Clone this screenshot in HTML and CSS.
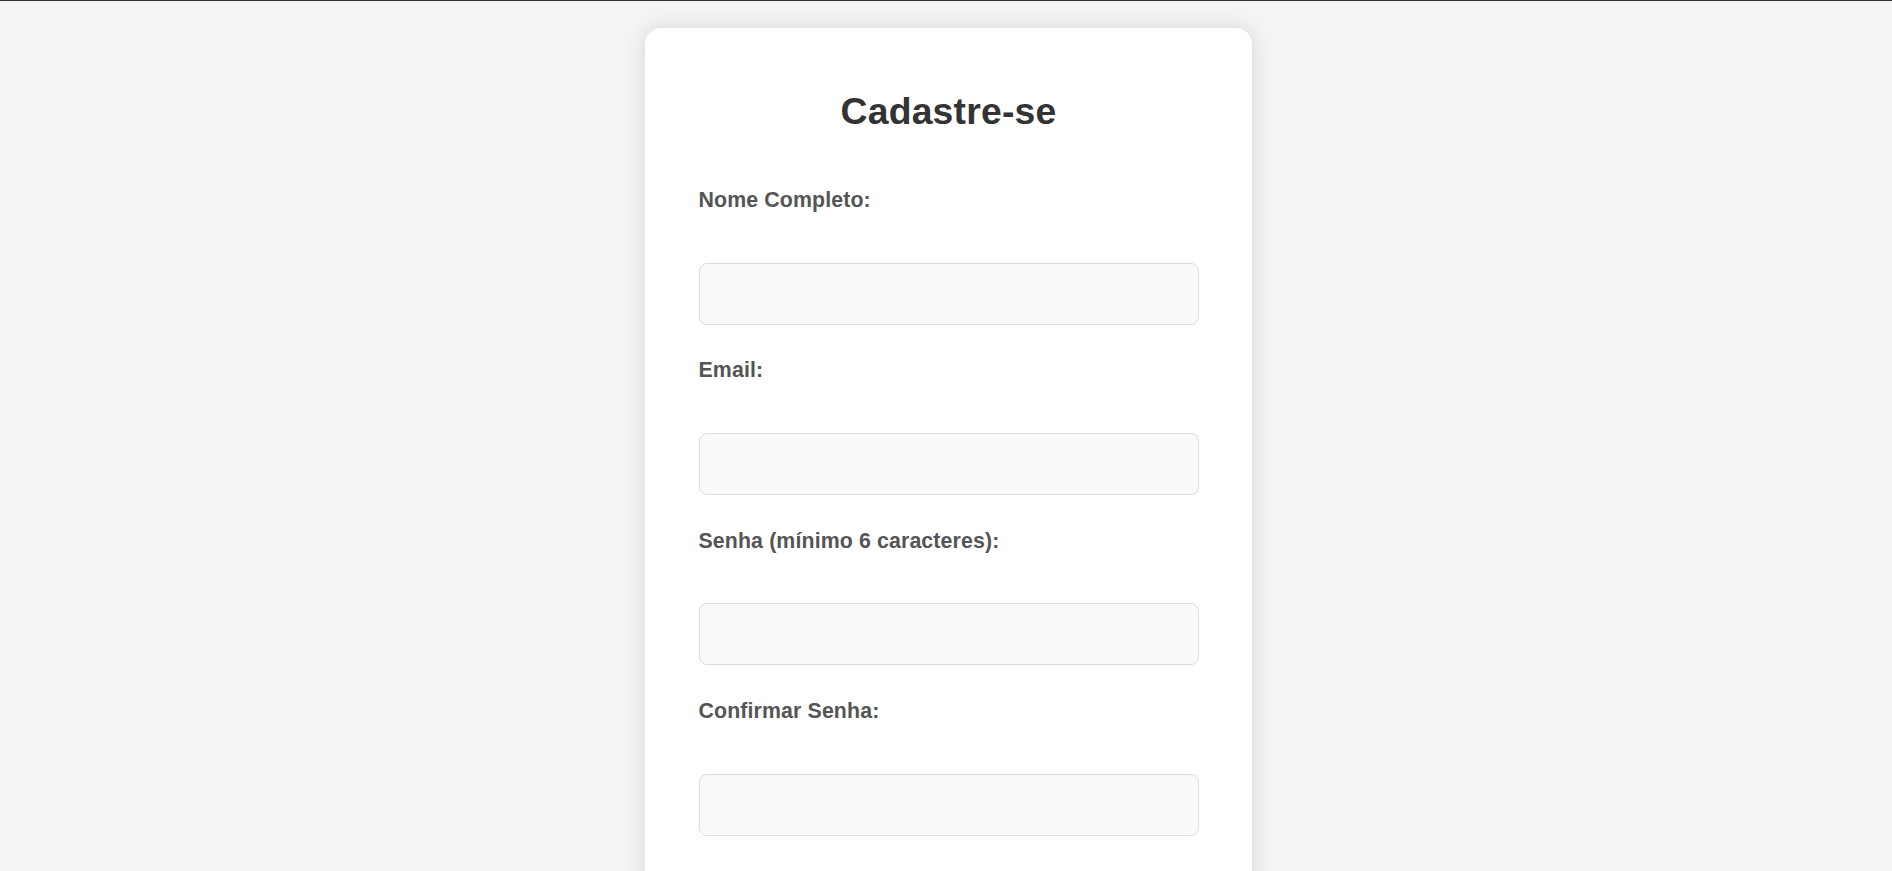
FILE: index.html
```html
<!DOCTYPE html>
<html lang="pt-BR">
<head>
<meta charset="utf-8">
<title>Cadastre-se</title>
<link rel="stylesheet" href="styles.css">
</head>
<body>
<main class="page">
  <section class="card">
    <h2 class="title">Cadastre-se</h2>
    <form class="form">
      <div class="field">
        <label class="label" for="nome">Nome Completo:</label>
        <input class="input" type="text" id="nome">
      </div>
      <div class="field">
        <label class="label" for="email">Email:</label>
        <input class="input" type="email" id="email">
      </div>
      <div class="field">
        <label class="label" for="senha">Senha (mínimo 6 caracteres):</label>
        <input class="input" type="password" id="senha">
      </div>
      <div class="field">
        <label class="label" for="confirmar">Confirmar Senha:</label>
        <input class="input" type="password" id="confirmar">
      </div>
    </form>
  </section>
</main>
</body>
</html>
```
FILE: styles.css
```css
html, body {
  margin: 0;
  padding: 0;
}
body {
  background: #f4f4f4;
  border-top: 1px solid #333;
  font-family: "Liberation Sans", Arial, sans-serif;
  overflow: hidden;
  height: 870px;
}
.page {
  display: flex;
  justify-content: center;
  padding-top: 27px;
  padding-left: 5px;
}
.card {
  width: 500px;
  padding: 53px 53.5px 40px;
  background: #fff;
  border-radius: 16px;
  box-shadow: 0 0 20px rgba(0, 0, 0, 0.12);
}
.title {
  margin: 9px 0 55px;
  font-size: 37.33px;
  font-weight: bold;
  color: #333;
  text-align: center;
  line-height: normal;
  letter-spacing: 0.2px;
}
.form {
  display: flex;
  flex-direction: column;
}
.field {
  display: flex;
  flex-direction: column;
}
.label {
  font-size: 21.33px;
  font-weight: bold;
  color: #555;
  line-height: normal;
  letter-spacing: 0.12px;
  margin-bottom: 49.8px;
}
.input {
  box-sizing: border-box;
  width: 500px;
  height: 62px;
  margin: 0 0 33.5px;
  border: 1px solid #ddd;
  border-radius: 8px;
  background: #f9f9f9;
  font-size: 21px;
  padding: 0 16px;
}
```
